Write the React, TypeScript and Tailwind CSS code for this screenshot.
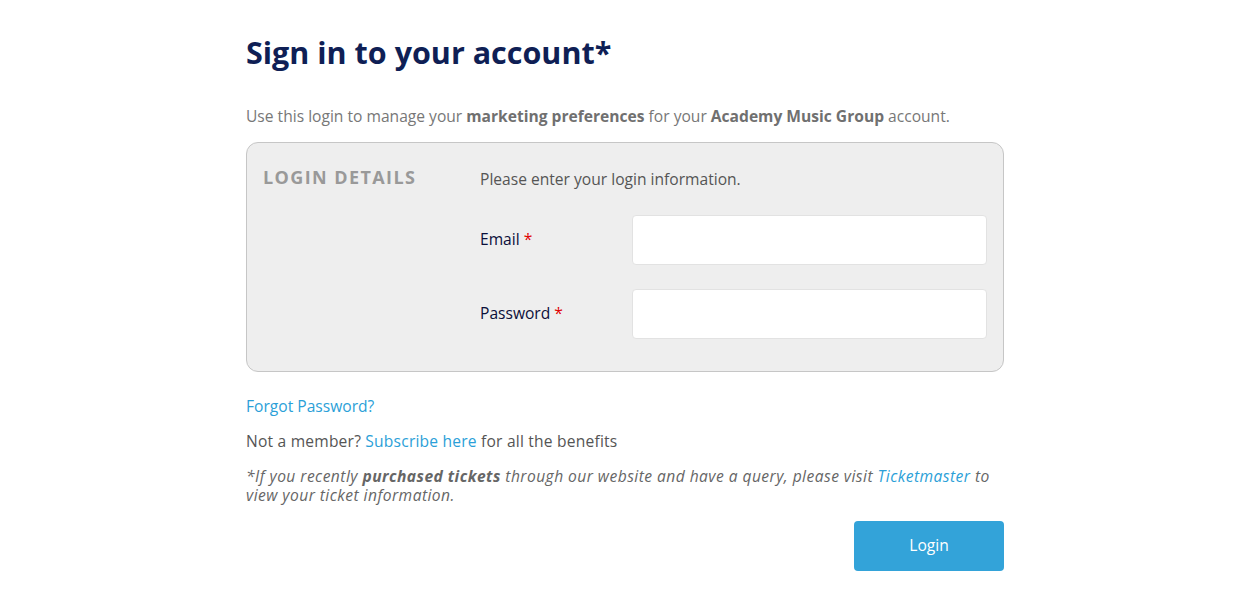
import React from "react";

export default function App() {
  return (
    <div className="min-h-[603px] w-full bg-white" style={{ fontFamily: '"Open Sans", "Noto Sans", sans-serif' }}>
      <div className="mx-auto w-[758px] pt-[30px]">
        <h1 className="text-[30.5px] font-bold leading-[44px] text-[#0f1f55]">Sign in to your account*</h1>
        <p className="mt-[32px] text-[15.6px] leading-[20px] text-[#777777]">
          Use this login to manage your <b className="text-[#707070]">marketing preferences</b> for your <b className="text-[#707070]">Academy Music Group</b> account.
        </p>
        <div className="mt-[16px] flex h-[230px] rounded-[12px] border border-[#c6c6c6] bg-[#eeeeee]">
          <div className="w-[233px] pl-[16px] pt-[22px] text-[18px] font-bold leading-[24px] tracking-[1.4px] text-[#999999]">LOGIN DETAILS</div>
          <div className="flex-1 pt-[26px] pr-[16px]">
            <div className="text-[15.6px] leading-[20px] text-[#555555]">Please enter your login information.</div>
            <div className="mt-[26px] flex items-center">
              <label className="w-[152px] text-[15.6px] text-[#0b0f3a]">Email <span className="text-[#e00000]">*</span></label>
              <input className="h-[50px] flex-1 rounded-[4px] border border-[#e2e2e2] bg-white outline-none" />
            </div>
            <div className="mt-[24px] flex items-center">
              <label className="w-[152px] text-[15.6px] text-[#0b0f3a]">Password <span className="text-[#e00000]">*</span></label>
              <input type="password" className="h-[50px] flex-1 rounded-[4px] border border-[#e2e2e2] bg-white outline-none" />
            </div>
          </div>
        </div>
        <div className="mt-[24px] text-[15.6px] leading-[20px] text-[#2b9fd8]">Forgot Password?</div>
        <div className="mt-[15px] text-[15.6px] leading-[20px] tracking-[0.2px] text-[#555555]">
          Not a member? <span className="text-[#2b9fd8]">Subscribe here</span> for all the benefits
        </div>
        <p className="mt-[16px] text-[15.6px] italic leading-[19px] tracking-[0.45px] text-[#666666]">
          *If you recently <b>purchased tickets</b> through our website and have a query, please visit <span className="text-[#2b9fd8]">Ticketmaster</span> to view your ticket information.
        </p>
        <div className="mt-[16px] flex justify-end">
          <button className="h-[50px] w-[150px] rounded-[4px] bg-[#33a3d9] text-[15.6px] text-white">Login</button>
        </div>
      </div>
    </div>
  );
}
